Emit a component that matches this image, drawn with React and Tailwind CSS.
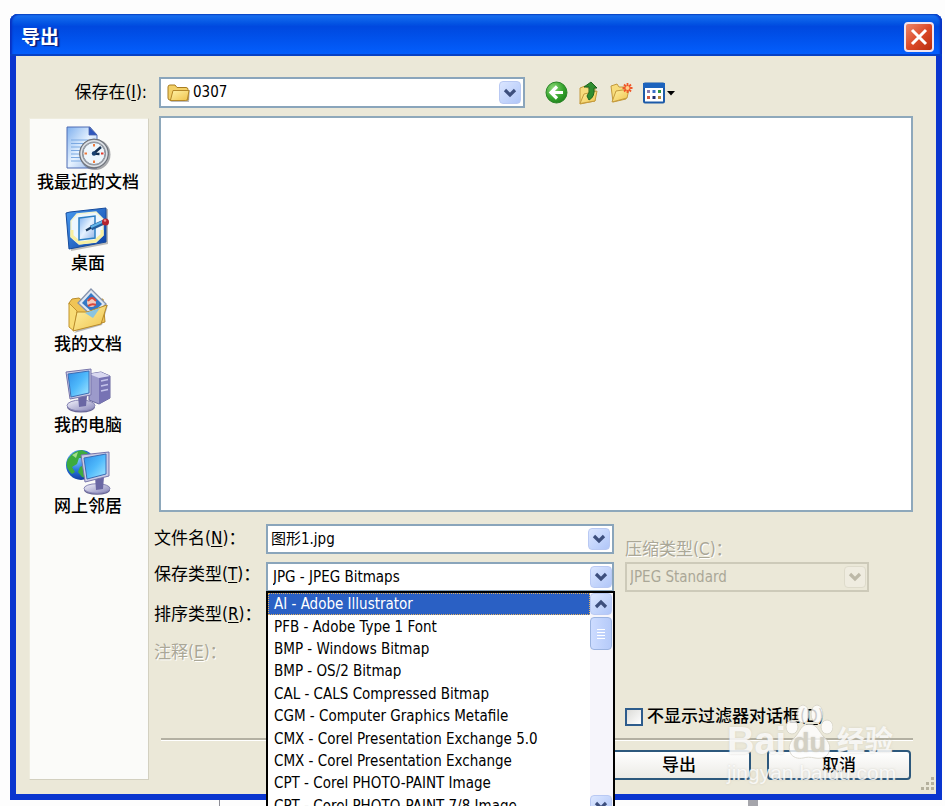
import React from "react";

const formats = [
  "AI - Adobe Illustrator",
  "PFB - Adobe Type 1 Font",
  "BMP - Windows Bitmap",
  "BMP - OS/2 Bitmap",
  "CAL - CALS Compressed Bitmap",
  "CGM - Computer Graphics Metafile",
  "CMX - Corel Presentation Exchange 5.0",
  "CMX - Corel Presentation Exchange",
  "CPT - Corel PHOTO-PAINT Image",
  "CPT - Corel PHOTO-PAINT 7/8 Image",
];

function Gradients() {
  return (
    <svg className="absolute h-0 w-0" aria-hidden="true">
      <defs>
        <linearGradient id="screen" x1="0" y1="0" x2="1" y2="1">
          <stop offset="0" stopColor="#2f8ee8" />
          <stop offset=".5" stopColor="#4fb9fb" />
          <stop offset="1" stopColor="#a5e8ff" />
        </linearGradient>
        <linearGradient id="metal" x1="0" y1="0" x2="1" y2="1">
          <stop offset="0" stopColor="#f4f4fc" />
          <stop offset="1" stopColor="#8583b8" />
        </linearGradient>
        <linearGradient id="gold" x1="0" y1="0" x2="1" y2="1">
          <stop offset="0" stopColor="#fff3a8" />
          <stop offset="1" stopColor="#efc24a" />
        </linearGradient>
        <linearGradient id="paper" x1="0" y1="0" x2="1" y2="1">
          <stop offset="0" stopColor="#7fb0ee" />
          <stop offset=".5" stopColor="#e6f2ff" />
          <stop offset="1" stopColor="#8fb2e6" />
        </linearGradient>
        <linearGradient id="pad" x1="0" y1="0" x2="1" y2="1">
          <stop offset="0" stopColor="#4a9cf0" />
          <stop offset="1" stopColor="#0a3fa5" />
        </linearGradient>
        <radialGradient id="globe" cx=".35" cy=".3" r=".8">
          <stop offset="0" stopColor="#8fd0ff" />
          <stop offset=".45" stopColor="#2878e0" />
          <stop offset="1" stopColor="#0b2c90" />
        </radialGradient>
        <radialGradient id="green" cx=".35" cy=".3" r=".8">
          <stop offset="0" stopColor="#8ed979" />
          <stop offset=".6" stopColor="#35a32c" />
          <stop offset="1" stopColor="#1d7d1a" />
        </radialGradient>
      </defs>
    </svg>
  );
}

function RecentIcon() {
  return (
    <svg width="46" height="46" viewBox="0 0 46 46" aria-hidden="true">
      <path d="M2 2h23l7 8v33H2z" fill="url(#paper)" stroke="#4f6cb4" />
      <path d="M24 2v8h8z" fill="#2f57bd" stroke="#4b66b0" strokeWidth=".8" />
      <path d="M6 15h17M6 18.500h13M6 22h10M6 25.500h9M6 29h9M6 32.500h10M6 36h12" stroke="#7ba9e2" />
      <circle cx="30" cy="29.500" r="15.500" fill="#55585f" opacity=".5" />
      <circle cx="29" cy="28.500" r="14.500" fill="#8f949d" stroke="#6b7078" />
      <circle cx="29" cy="28.500" r="12.800" fill="none" stroke="#dfe3e8" strokeWidth="1.500" />
      <circle cx="29" cy="28.500" r="11" fill="#eef6fc" stroke="#8d949e" />
      <path d="M29 19v2.500M29 35.500V38M19.500 28.500H22" stroke="#ee7a3c" strokeWidth="2" />
      <path d="M36 28.500h2.500" stroke="#e63a2c" strokeWidth="2" />
      <path d="M28 29l8-7M28 28.500l6.500 0.500" stroke="#152f50" strokeWidth="2.400" />
      <circle cx="29" cy="28.500" r="2.200" fill="#1b4170" />
    </svg>
  );
}

function DesktopIcon() {
  return (
    <svg width="46" height="46" viewBox="0 0 46 46" aria-hidden="true">
      <path d="M5 8l38-5v35L6 45z" fill="#777" opacity=".5" />
      <path d="M1 7l4-1 36-4v34L4 43z" fill="url(#pad)" stroke="#164b9c" />
      <path d="M12 8l19-2 7 7v16l-7 7-17 2-8-7V15z" fill="#eef7ff" stroke="#f3f4d0" strokeWidth="1.500" />
      <path d="M7 24v6l8 7 15-2 7-6v-5" fill="none" stroke="#f8efa0" strokeWidth="3" />
      <path d="M14 12l16-2v22L14 34z" fill="url(#paper)" stroke="#2d80c4" strokeWidth="1.500" />
      <path d="M21 24.500l7-4" stroke="#16375c" strokeWidth="2.200" />
      <path d="M26 22l13-6" stroke="#225d9e" strokeWidth="5" />
      <path d="M26 21l13-6" stroke="#62b5e9" strokeWidth="2" />
      <circle cx="40.500" cy="16" r="3.500" fill="#b5232f" />
      <circle cx="40" cy="14.500" r="1.200" fill="#ec8b8b" />
    </svg>
  );
}

function DocumentsIcon() {
  return (
    <svg width="46" height="46" viewBox="0 0 46 46" aria-hidden="true">
      <path d="M9 46l28-8 6-20-5 0z" fill="#777" opacity=".5" />
      <path d="M4 16l3-4 7-1 5 4 19-3 2 23-30 8z" fill="#f0c455" stroke="#b98b2a" />
      <path d="M26 2l15 15-13 13-15-14z" fill="#dfe7f2" stroke="#8593ad" strokeWidth="1.300" />
      <path d="M26 6l11 11-9 9-11-10z" fill="#3478c6" />
      <circle cx="26.500" cy="15.500" r="4.500" fill="#f4c9bb" />
      <path d="M23 14q4-6 8 0M23 19q4-3 8-1" fill="none" stroke="#d8473c" strokeWidth="2" />
      <path d="M4 16v24l5 4 3-20z" fill="#f9dc75" stroke="#c2932d" />
      <path d="M12 25l10 0 20-7-6 19-28 7z" fill="url(#gold)" stroke="#b98b2a" />
      <path d="M20 26l15-5-7 10z" fill="#8bc4df" />
    </svg>
  );
}

function ComputerIcon() {
  return (
    <svg width="46" height="46" viewBox="0 0 46 46" aria-hidden="true">
      <path d="M24 6l12-2 9 4v22l-11 6-10-4z" fill="#9c9acb" stroke="#66659c" />
      <path d="M34 9l11-1v22l-11 6z" fill="#7773b4" />
      <path d="M36 13l7-1.500M36 18l7-1.500M36 23l7-1.500" stroke="#c4c3ea" strokeWidth="1.600" />
      <path d="M24 6l12-2 9 4-11 2z" fill="#d9d8f0" />
      <ellipse cx="16" cy="39" rx="14" ry="5.500" fill="#666494" />
      <ellipse cx="16" cy="37.500" rx="14" ry="5.500" fill="url(#metal)" stroke="#8886b5" />
      <path d="M13 28h9l-1 10-7 1z" fill="#6a67a4" />
      <path d="M1 4l25-3v26L5 31z" fill="#c9cae4" stroke="#7775ab" />
      <path d="M3 6l21-3v22L6 29z" fill="url(#screen)" stroke="#3c6db5" />
    </svg>
  );
}

function NetworkIcon() {
  return (
    <svg width="46" height="46" viewBox="0 0 46 46" aria-hidden="true">
      <circle cx="16" cy="16" r="15" fill="url(#globe)" />
      <path d="M3 10Q8 2 17 1l6 3-4 5-5 0-2 6-5 3 3 5-3 2Q-1 18 3 10zM15 18l6-3v14l-4-1-4-5z" fill="#3cab3f" />
      <path d="M7 6l6-3-2 6z" fill="#a5e08c" />
      <ellipse cx="32" cy="41" rx="13" ry="4.800" fill="#666494" />
      <ellipse cx="32" cy="39.500" rx="13" ry="4.800" fill="url(#metal)" stroke="#8886b5" />
      <path d="M30 28h9l-1 12-7 1z" fill="#6a67a4" />
      <path d="M16 6l28-3 0 24-24 6z" fill="#c9cae4" stroke="#7775ab" />
      <path d="M19 9l22-4 0 20-19 5z" fill="url(#screen)" stroke="#3c6db5" />
    </svg>
  );
}

function FolderIcon() {
  return (
    <svg width="24" height="20" viewBox="0 0 24 20" aria-hidden="true">
      <path d="M3 19h19l1-12-2 0z" fill="#777" opacity=".5" />
      <path d="M1 4q0-2 2-2h5l2 2.500h9q2 0 2 2V17H3q-2 0-2-2z" fill="#f3d067" stroke="#a87d20" />
      <path d="M3.500 17L6 7.500h16L20.500 16q-.3 1.500-2 1.500H3z" fill="url(#gold)" stroke="#b48728" />
    </svg>
  );
}

function BackIcon() {
  return (
    <svg width="23" height="23" viewBox="0 0 23 23" aria-hidden="true">
      <circle cx="11.500" cy="11.500" r="10.500" fill="url(#green)" stroke="#2a8427" />
      <path d="M18 11.500H6.500M12 5.500l-6 6 6 6" fill="none" stroke="#fff" strokeWidth="3.200" />
    </svg>
  );
}

function UpIcon() {
  return (
    <svg width="22" height="24" viewBox="0 0 22 24" aria-hidden="true">
      <path d="M2 7l5-2 3 2h7v13L2 23z" fill="#f7dc7c" stroke="#c49a3c" />
      <path d="M2 22.500L6 13l13-3-2 10z" fill="url(#gold)" stroke="#c49a3c" />
      <path d="M6 6l7-5 6 6h-3q1 9-5 12l-2-4q3-3 2-9z" fill="#2f8d2f" stroke="#1c651f" />
    </svg>
  );
}

function NewFolderIcon() {
  return (
    <svg width="23" height="21" viewBox="0 0 23 21" aria-hidden="true">
      <path d="M1 4l6-2 2 3h7v12L3 20z" fill="#f7dc7c" stroke="#c49a3c" />
      <path d="M2 20L6 9l13-2-2 9z" fill="url(#gold)" stroke="#c49a3c" />
      <path d="M17.500 1v10M12.500 6h10M14 2.500l7 7M21 2.500l-7 7" stroke="#f0582a" strokeWidth="1.800" />
      <circle cx="17.500" cy="6" r="2" fill="#ffd08a" />
    </svg>
  );
}

function ViewIcon() {
  return (
    <svg width="32" height="22" viewBox="0 0 32 22" aria-hidden="true">
      <rect x="1" y="1.500" width="20" height="19" rx="1" fill="#fff" stroke="#1c5aa8" strokeWidth="2" />
      <path d="M0 1h22v5H0z" fill="#1c63bd" />
      <path d="M4 8h3v3H4z" fill="#8a7cae" />
      <path d="M9.500 8h3v3h-3z" fill="#3b71c9" />
      <path d="M15 8h3v3h-3z" fill="#2e9643" />
      <path d="M4 14h3v3H4z" fill="#d3573f" />
      <path d="M9.500 14h3v3h-3z" fill="#1c2e6b" />
      <path d="M15 14h3v3h-3z" fill="#b4893d" />
      <path d="M24 9h8l-4 4.500z" fill="#000" />
    </svg>
  );
}

function Chevron({ up = false, muted = false }) {
  return (
    <svg width="14" height="10" viewBox="0 0 14 10" aria-hidden="true">
      <path
        d={up ? "M2 8l5-5 5 5" : "M2 2l5 5 5-5"}
        fill="none"
        stroke={muted ? "#bdb9a8" : "#3d4f7d"}
        strokeWidth="3.200"
      />
    </svg>
  );
}

function Arrow({ up, muted }) {
  return (
    <span
      className={
        "pointer-events-none flex w-[22px] shrink-0 items-center justify-center rounded-sm border " +
        (muted
          ? "border-[#dedbcb] bg-[#efece0]"
          : "border-[#b9c9f3] bg-linear-to-br from-[#dbe6ff] to-[#b0c6f8]")
      }
    >
      <Chevron up={up} muted={muted} />
    </span>
  );
}

function Key({ children }) {
  return <span className="underline underline-offset-2">{children}</span>;
}

const places = [
  ["我最近的文档", RecentIcon],
  ["桌面", DesktopIcon],
  ["我的文档", DocumentsIcon],
  ["我的电脑", ComputerIcon],
  ["网上邻居", NetworkIcon],
];

function Watermark() {
  return (
    <div className="pointer-events-none absolute right-[43px] bottom-2 w-[166px] font-['Liberation_Sans','Noto_Sans_CJK_SC',sans-serif] text-white/80 select-none [text-shadow:0_0_2px_#b5b2a580]">
      <div className="relative flex h-[56px] items-end justify-between">
        <span className="text-[38px] leading-[38px] font-bold">Bai</span>
        <span className="text-[28px] leading-[36px] font-bold">经验</span>
        <svg className="absolute top-0 left-[58px]" width="48" height="56" viewBox="0 0 48 56" aria-hidden="true">
          <g fill="#fff" stroke="#d5d2c6" opacity=".8">
            <ellipse cx="18" cy="10" rx="6" ry="9" />
            <ellipse cx="32" cy="10" rx="6" ry="9" />
            <ellipse cx="7" cy="23" rx="6" ry="7" />
            <ellipse cx="42" cy="23" rx="6" ry="7" />
            <path d="M24 20c8 0 10 8 15 13s7 9 5 15-9 7-14 6-8-1-12 0-11 0-13-6 0-10 5-15 6-13 14-13z" />
          </g>
        </svg>
        <span className="absolute bottom-0 left-[66px] text-[27px] leading-[34px] font-bold text-[#d3d0c4]">du</span>
      </div>
      <div className="text-[21px] leading-[26px] whitespace-nowrap">jingyan.baidu.com</div>
    </div>
  );
}

export default function App() {
  return (
    <div className="flex h-screen flex-col overflow-hidden bg-[#fdfdfd] pt-[14px] pr-[3px] pl-[10px] font-['DejaVu_Sans_Condensed','Noto_Sans_CJK_SC',sans-serif] text-[15px] text-black">
      <Gradients />
      <section className="relative shrink-0 rounded-t-lg border-x-[6px] border-b-[6px] border-[#0a35cf] bg-[#0a35cf]">
        <header className="-mx-[6px] flex h-[42px] items-center justify-between rounded-t-lg bg-linear-to-b from-[#1c73f0] via-[#0048df] via-30% to-[#0460ff] pr-2 pl-[11px] shadow-[inset_0_1px_0_#0a48c8,inset_0_-2px_0_#0741c4,inset_2px_0_2px_#0a30c0,inset_-2px_0_2px_#0a30c0]">
          <h1 className="pt-1 text-[19px] leading-6 font-bold text-white [text-shadow:2px_1px_1px_#0a1f80]">导出</h1>
          <button
            type="button"
            aria-label="关闭"
            className="mt-1 flex size-[30px] items-center justify-center rounded border-2 border-[#f2e4ee] bg-linear-to-br from-[#ec8468] via-[#dc4a28] to-[#b82c0c]"
          >
            <svg width="18" height="18" viewBox="0 0 18 18" aria-hidden="true">
              <path d="M2 2l14 14M16 2L2 16" stroke="#fff" strokeWidth="3" />
            </svg>
          </button>
        </header>

        <div className="bg-[#ebe8d8] pt-[21px] pr-[23px] pb-[14px] pl-[13px]">
          <div className="flex h-[31px] items-center">
            <label htmlFor="folder" className="w-[130px] pr-3 text-right text-[17px]">
              保存在(<Key>I</Key>):
            </label>
            <div className="relative flex h-full w-[366px] border-2 border-[#8aa5bb] bg-white py-[2px] pr-[2px] pl-1">
              <span className="flex w-[28px] items-center pl-[2px]">
                <FolderIcon />
              </span>
              <select id="folder" className="min-w-0 flex-1 appearance-none bg-transparent outline-none">
                <option>0307</option>
              </select>
              <Arrow />
            </div>
            <div className="ml-5 flex items-center gap-[10px]">
              <button type="button" aria-label="后退"><BackIcon /></button>
              <button type="button" aria-label="向上一级"><UpIcon /></button>
              <button type="button" aria-label="新建文件夹"><NewFolderIcon /></button>
              <button type="button" aria-label="视图"><ViewIcon /></button>
            </div>
          </div>

          <div className="mt-2 flex gap-[5px]">
            <nav className="mt-[2px] w-[120px] shrink-0 border border-[#d3d0c0] border-t-[#efeddf] border-l-[#efeddf] bg-[#fbfbf9] pt-[6px] pr-[2px]">
              {places.map(([name, Icon]) => (
                <button key={name} type="button" className="flex h-[81px] w-full flex-col items-center text-[17px] leading-[22px] font-medium whitespace-nowrap">
                  <Icon />
                  {name}
                </button>
              ))}
            </nav>

            <main className="min-w-0 flex-1">
              <div className="ml-[5px] h-[396px] border-2 border-[#8ea8bb] bg-white" />

              <div className="mt-3 flex gap-[11px]">
                <div className="grid w-[460px] shrink-0 grid-cols-[112px_1fr] content-start gap-y-2">
                  <label htmlFor="filename" className="self-center text-[17px]">
                    文件名(<Key>N</Key>)：
                  </label>
                  <div className="flex h-[30px] border-2 border-[#8aa5bb] bg-white py-[2px] pr-[2px] pl-[3px]">
                    <input id="filename" defaultValue="图形1.jpg" className="min-w-0 flex-1 bg-transparent outline-none" />
                    <Arrow />
                  </div>

                  <label htmlFor="type" className="self-center pb-1 text-[17px]">
                    保存类型(<Key>T</Key>)：
                  </label>
                  <div className="relative flex h-[30px] border-2 border-[#8aa5bb] bg-white py-[2px] pl-[5px]">
                    <select id="type" className="min-w-0 flex-1 appearance-none bg-transparent outline-none">
                      <option>JPG - JPEG Bitmaps</option>
                    </select>
                    <Arrow />
                    <div className="absolute top-[27px] -right-[3px] -left-[2px] z-10 flex h-[228px] border-2 border-black bg-white">
                      <ul role="listbox" aria-label="保存类型" className="grid min-w-0 flex-1 grid-rows-10">
                        {formats.map((name, i) => (
                          <li
                            key={name}
                            role="option"
                            aria-selected={i === 0}
                            className={
                              "flex items-center border border-dotted pl-[5px] leading-5 whitespace-nowrap " +
                              (i === 0 ? "border-[#e0b060] bg-[#2a60c4] text-white" : "border-transparent")
                            }
                          >
                            {name}
                          </li>
                        ))}
                      </ul>
                      <div className="flex w-[23px] flex-col bg-[#f6f5fb]">
                        <div className="flex h-[22px]"><Arrow up /></div>
                        <div className="mt-[2px] flex h-[33px] w-[22px] flex-col items-center justify-center gap-[2px] rounded-sm border border-[#9bb3e0] bg-linear-to-r from-[#cddcff] to-[#b5caf9]">
                          <span className="h-px w-2 bg-white" />
                          <span className="h-px w-2 bg-white" />
                          <span className="h-px w-2 bg-white" />
                          <span className="h-px w-2 bg-white" />
                        </div>
                        <div className="mt-auto flex h-[22px]"><Arrow /></div>
                      </div>
                    </div>
                  </div>

                  <p className="flex h-[30px] items-center text-[17px]">
                    <span>排序类型(<Key>R</Key>)：</span>
                  </p>
                  <span />
                  <p className="flex h-[30px] items-center text-[17px] text-[#aaa797] [text-shadow:1px_1px_0_#fff]">
                    <span>注释(<Key>E</Key>)：</span>
                  </p>
                </div>

                <div className="flex min-w-0 flex-1 flex-col items-start">
                  <label htmlFor="compression" className="flex h-[38px] items-end text-[17px] text-[#aaa797] [text-shadow:1px_1px_0_#fff]">
                    <span>压缩类型(<Key>C</Key>)：</span>
                  </label>
                  <div className="flex h-[30px] w-[244px] border-2 border-[#cdcab9] py-[2px] pr-[1px] pl-[3px]">
                    <select id="compression" disabled className="min-w-0 flex-1 appearance-none bg-transparent text-[#aaa797] opacity-100 outline-none">
                      <option>JPEG Standard</option>
                    </select>
                    <Arrow muted />
                  </div>
                  <label className="mt-[112px] flex h-[26px] items-center gap-1 text-[17px] font-medium whitespace-nowrap">
                    <input type="checkbox" className="size-[18px] appearance-none border-2 border-[#2d5c8c] bg-linear-to-br from-[#dcdcd8] to-white" />
                    <span>不显示过滤器对话框(<Key>D</Key>)</span>
                  </label>
                </div>
              </div>

              <hr className="mt-2 ml-[7px] border-t-2 border-b border-t-[#b3b0a2] border-b-white" />
              <div className="mt-[9px] flex justify-end gap-4 pr-[2px]">
                <button type="button" className="h-[30px] w-[144px] rounded border-2 border-[#2d587c] bg-linear-to-b from-white to-[#ecebe6] text-[17px] leading-6 font-medium">
                  导出
                </button>
                <button type="button" className="h-[30px] w-[144px] rounded border-2 border-[#2d587c] bg-linear-to-b from-white to-[#ecebe6] text-[17px] leading-6 font-medium">
                  取消
                </button>
              </div>
            </main>
          </div>
        </div>

        <svg className="absolute right-[1px] bottom-[2px]" width="16" height="16" viewBox="0 0 16 16" aria-hidden="true">
          <path d="M12 1h3v3h-3zM7 6h3v3H7zM12 6h3v3h-3zM2 11h3v3H2zM7 11h3v3H7zM12 11h3v3h-3z" fill="#b5b19d" />
        </svg>
        <Watermark />
      </section>
      <div className="flex flex-1 justify-between pr-[184px] pl-[209px]">
        <span className="w-px bg-[#8d8d96]" />
        <span className="w-[10px] bg-[#a5a5ab]" />
      </div>
    </div>
  );
}
